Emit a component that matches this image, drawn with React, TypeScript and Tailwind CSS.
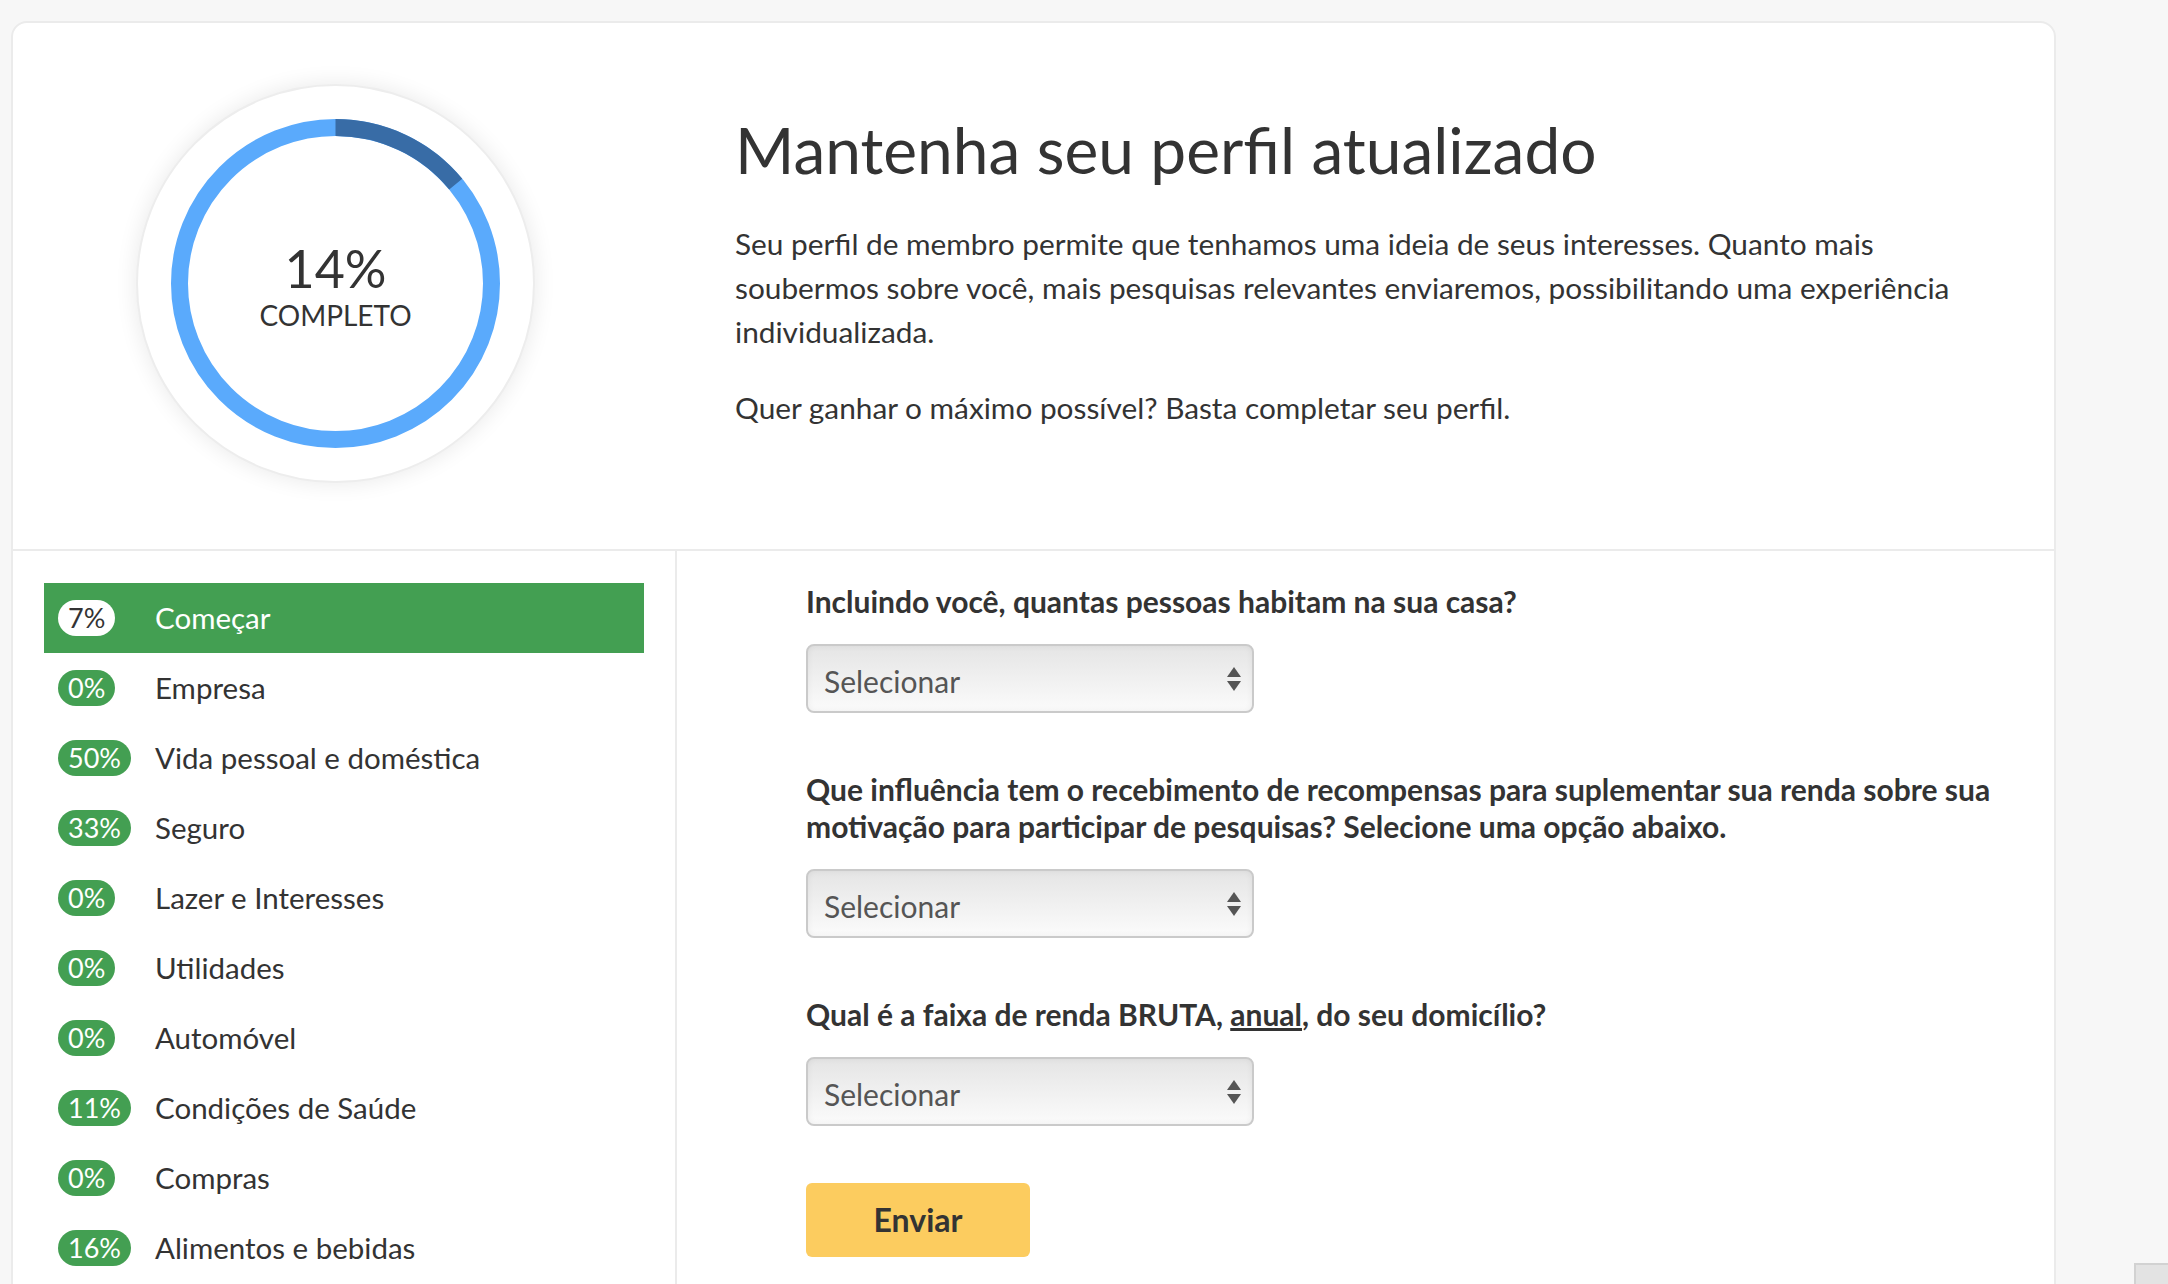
import React from 'react';

// sidebar sections with their completion
const sections = [
  { pct: '7%', label: 'Começar', active: true },
  { pct: '0%', label: 'Empresa' },
  { pct: '50%', label: 'Vida pessoal e doméstica' },
  { pct: '33%', label: 'Seguro' },
  { pct: '0%', label: 'Lazer e Interesses' },
  { pct: '0%', label: 'Utilidades' },
  { pct: '0%', label: 'Automóvel' },
  { pct: '11%', label: 'Condições de Saúde' },
  { pct: '0%', label: 'Compras' },
  { pct: '16%', label: 'Alimentos e bebidas' },
];

const ProgressRing: React.FC<{ percent: number }> = ({ percent }) => {
  const r = 156;
  const c = 2 * Math.PI * r;
  return (
    <div className="relative w-[399px] h-[399px] rounded-full bg-white border-2 border-[#ededed] shadow-[0_0_22px_rgba(0,0,0,0.09)] flex items-center justify-center">
      <svg width="329" height="329" viewBox="0 0 329 329" className="absolute">
        <circle cx="164.5" cy="164.5" r={r} fill="none" stroke="#5aaafc" strokeWidth="17" />
        <circle
          cx="164.5"
          cy="164.5"
          r={r}
          fill="none"
          stroke="#386ca6"
          strokeWidth="17"
          strokeDasharray={`${(c * percent) / 100} ${c}`}
          transform="rotate(-90 164.5 164.5)"
        />
      </svg>
      <div className="relative flex flex-col items-center text-[#333] mt-[2px]">
        <span className="text-[52px] leading-[56px]">{percent}%</span>
        <span className="text-[28px] leading-[30px] mt-[4px]">COMPLETO</span>
      </div>
    </div>
  );
};

const SelectBox: React.FC = () => (
  <div className="relative mt-[24px] w-[448px] h-[69px] rounded-[8px] border-2 border-[#cacaca] bg-gradient-to-b from-[#e5e5e5] to-[#fbfbfb] shadow-[inset_0_0_6px_rgba(0,0,0,0.06)] flex items-center pl-[16px]">
    <span className="text-[30px] text-[#555] leading-none mt-[4px]">Selecionar</span>
    <svg width="16" height="26" viewBox="0 0 16 26" className="absolute right-[10px] top-[21px]">
      <polygon points="8,0 15,10 1,10" fill="#555" />
      <polygon points="1,14 15,14 8,24" fill="#555" />
    </svg>
  </div>
);

export default function App() {
  return (
    <div className="relative min-h-screen bg-[#f7f7f7] font-['Lato',sans-serif] text-[#333] pt-[21px] pl-[11px] overflow-hidden h-[1284px]">
      <div className="w-[2045px] bg-white border-2 border-[#ebebeb] rounded-[16px]">
        {/* Header with progress */}
        <div className="flex h-[528px] border-b-2 border-[#ebebeb]">
          <div className="shrink-0 pl-[123px] pt-[61px]">
            <ProgressRing percent={14} />
          </div>
          <div className="ml-[200px] pt-[91px] w-[1230px] shrink-0">
            <h1 className="text-[64px] leading-[72px] font-normal">Mantenha seu perfil atualizado</h1>
            <p className="mt-[36px] text-[29.8px] leading-[44px]">
              Seu perfil de membro permite que tenhamos uma ideia de seus interesses. Quanto mais soubermos sobre você, mais pesquisas relevantes enviaremos, possibilitando uma experiência individualizada.
            </p>
            <p className="mt-[32px] text-[29.8px] leading-[44px]">
              Quer ganhar o máximo possível? Basta completar seu perfil.
            </p>
          </div>
        </div>

        <div className="flex">
          {/* Sidebar */}
          <div className="w-[664px] shrink-0 border-r-2 border-[#ebebeb] pt-[32px] px-[31px] pb-[40px]">
            {sections.map((s) => (
              <div
                key={s.label}
                className={`flex items-center h-[70px] pl-[14px] ${s.active ? 'bg-[#439f52] text-white' : 'text-[#333]'}`}
              >
                <div className="w-[97px] flex">
                  <span
                    className={`h-[36px] px-[10px] rounded-full text-[27px] leading-[36px] ${
                      s.active ? 'bg-white text-[#333]' : 'bg-[#439f52] text-white'
                    }`}
                  >
                    {s.pct}
                  </span>
                </div>
                <span className="text-[29.5px]">{s.label}</span>
              </div>
            ))}
          </div>

          {/* Questions */}
          <div className="flex-1 pl-[129px] pt-[32px] pr-[40px]">
            <div>
              <p className="text-[30px] leading-[37px] font-bold">Incluindo você, quantas pessoas habitam na sua casa?</p>
              <SelectBox />
            </div>
            <div className="mt-[58px]">
              <p className="text-[30px] leading-[37px] font-bold max-w-[1200px]">
                Que influência tem o recebimento de recompensas para suplementar sua renda sobre sua motivação para participar de pesquisas? Selecione uma opção abaixo.
              </p>
              <SelectBox />
            </div>
            <div className="mt-[58px]">
              <p className="text-[30px] leading-[37px] font-bold">
                Qual é a faixa de renda BRUTA, <span className="underline">anual</span>, do seu domicílio?
              </p>
              <SelectBox />
            </div>
            <button className="mt-[57px] w-[224px] h-[74px] rounded-[6px] bg-[#fccc5f] text-[32px] font-bold text-[#333]">
              Enviar
            </button>
          </div>
        </div>
      </div>
      <div className="absolute left-[2134px] top-[1263px] w-[60px] h-[40px] bg-[#e3e3e3] border-2 border-[#d2d2d2]" />
    </div>
  );
}
